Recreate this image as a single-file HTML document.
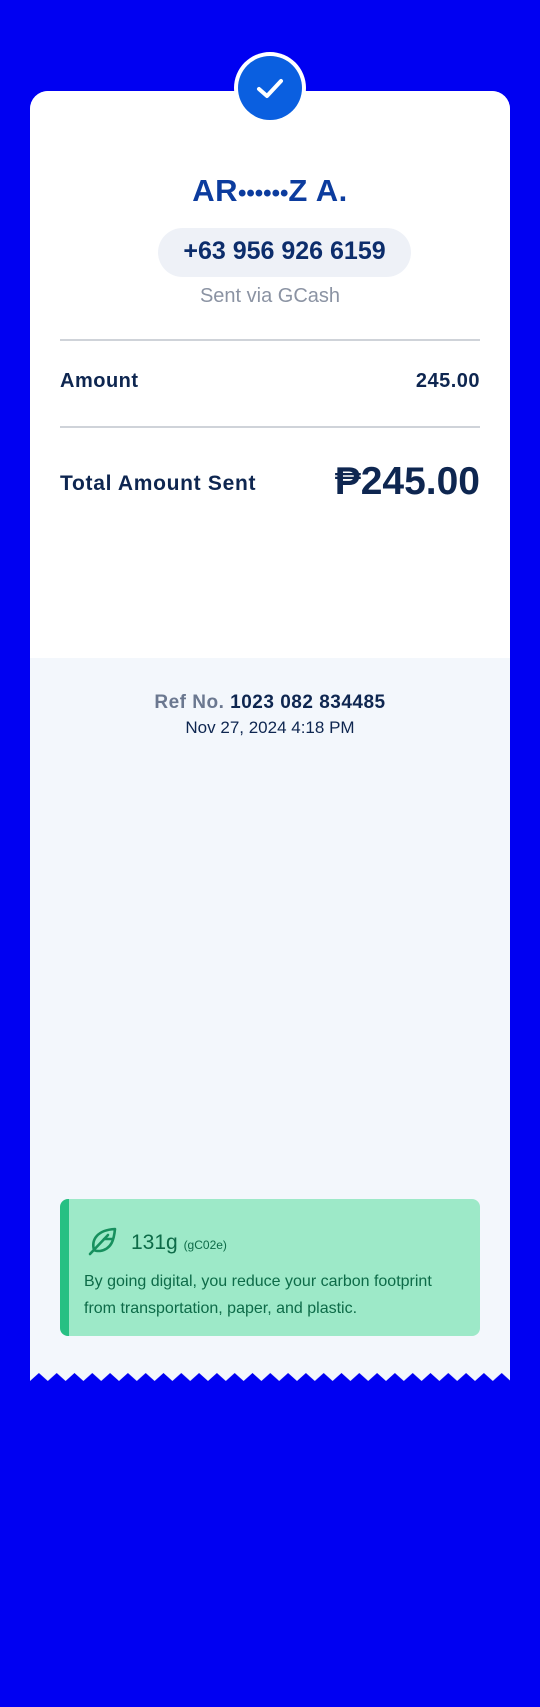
<!DOCTYPE html>
<html><head><meta charset="utf-8"><style>
*{margin:0;padding:0;box-sizing:border-box}
body{width:540px;height:1707px;background:#0000f2;font-family:"Liberation Sans",sans-serif;position:relative;overflow:hidden}
.card{position:absolute;left:30px;top:91px;width:480px;height:1290px;background:#f3f7fc;border-radius:18px 18px 0 0;overflow:hidden}
.white{position:absolute;left:0;top:0;width:480px;height:567px;background:#fff}
.chk{position:absolute;left:234px;top:52px;width:72px;height:72px;border-radius:50%;background:#fff}
.chk div{position:absolute;left:4px;top:4px;width:64px;height:64px;border-radius:50%;background:#0a5fe0}
.t{position:absolute;white-space:nowrap}
.c{left:0;width:540px;text-align:center}
.line{position:absolute;left:60px;width:420px;height:2px;background:#cfd3d9}
.green{position:absolute;left:60px;top:1199px;width:420px;height:137px;background:#9de9c8;border-radius:8px;border-left:9px solid #27c083}
</style></head><body>
<div class="card"><div class="white"></div></div>
<div class="green"></div>
<div class="chk"><div><svg width="64" height="64" viewBox="0 0 64 64"><path d="M21 33 L29 40 L43 25" stroke="#fff" stroke-width="4" fill="none" stroke-linecap="round" stroke-linejoin="round"/></svg></div></div>
<div class="t c" style="top:173px;font-size:31px;font-weight:bold;color:#0c3c9e;letter-spacing:0.5px">AR<span style="font-size:24px;letter-spacing:0px">••••••</span>Z A.</div>
<div style="position:absolute;left:158px;top:228px;width:253px;height:49px;border-radius:25px;background:#eef1f7"></div>
<div class="t" style="left:158px;width:253px;text-align:center;top:237px;font-size:25px;font-weight:bold;color:#0c2d6b">+63 956 926 6159</div>
<div class="t c" style="top:285px;font-size:20px;color:#8b93a3">Sent via GCash</div>
<div class="line" style="top:339px"></div>
<div class="t" style="left:60px;top:370px;font-size:20px;font-weight:bold;color:#0e2650;letter-spacing:0.5px">Amount</div>
<div class="t" style="right:60px;top:370px;font-size:20px;font-weight:bold;color:#0e2650;letter-spacing:0.5px">245.00</div>
<div class="line" style="top:426px"></div>
<div class="t" style="left:60px;top:472px;font-size:21px;font-weight:bold;color:#0e2650;letter-spacing:0.7px">Total Amount Sent</div>
<div class="t" style="right:60px;top:460px;font-size:39px;font-weight:bold;color:#0e2650">₱245.00</div>
<div class="t c" style="top:692px;font-size:19px;font-weight:bold;color:#0e2650;letter-spacing:0.5px"><span style="color:#6b7890">Ref No.</span> 1023 082 834485</div>
<div class="t c" style="top:718px;font-size:17px;color:#0e2650">Nov 27, 2024 4:18 PM</div>
<svg style="position:absolute;left:86px;top:1225px" width="32" height="32" viewBox="0 0 32 32"><path d="M4 29 L22 10 M8 25 C5 14 12 5 29 4 C28 14 26 24 14 26 C11 26 9 26 8 25 Z M18 14 L26 14" stroke="#17905e" stroke-width="2.6" fill="none" stroke-linecap="round" stroke-linejoin="round"/></svg>
<div class="t" style="left:131px;top:1231px;font-size:21px;color:#0d6b48">131g <span style="font-size:12px">(gC02e)</span></div>
<div class="t" style="left:84px;top:1268px;font-size:16px;color:#0d6b48;line-height:27px">By going digital, you reduce your carbon footprint<br>from transportation, paper, and plastic.</div>
<svg style="position:absolute;left:30px;top:1372px" width="480" height="14" viewBox="0 0 480 14" preserveAspectRatio="none">
<defs><pattern id="z" width="17.8" height="14" patternUnits="userSpaceOnUse"><path d="M0 14 L0 9 L8.9 1 L17.8 9 L17.8 14 Z" fill="#0000f2"/></pattern></defs>
<rect x="0" y="0" width="480" height="14" fill="url(#z)"/><rect x="0" y="10" width="480" height="4" fill="#0000f2"/></svg>
</body></html>
